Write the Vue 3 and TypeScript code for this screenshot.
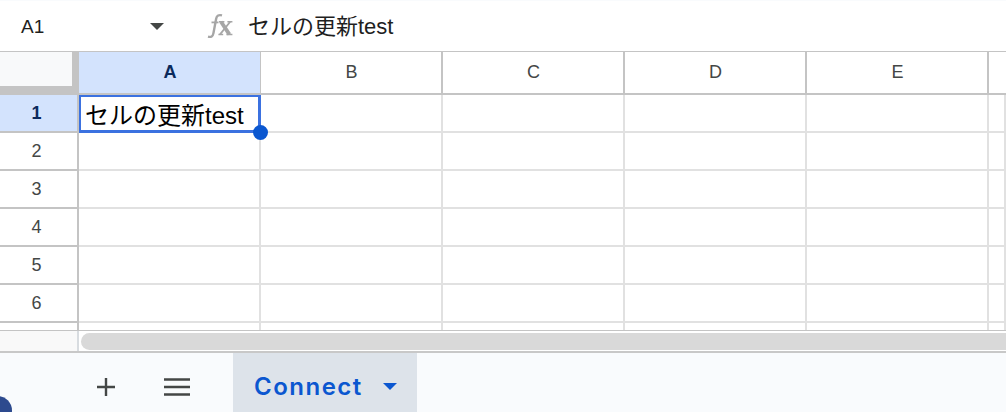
<script setup lang="ts">
const cols: string[] = ['A', 'B', 'C', 'D', 'E']
const rows: number[] = [1, 2, 3, 4, 5, 6]
const extraCols: number[] = [0, 1, 2, 3, 4, 5]
</script>

<template>
  <div class="app">
    <div class="formula">
      <div class="namebox">
        <span class="cellname">A1</span>
        <span class="caret"></span>
      </div>
      <svg class="fx" width="28" height="28" viewBox="0 0 28 28">
        <path d="M17 3.4c-3.2-.9-5.2.2-5.8 3.2L8.4 21.4c-.6 3-2.2 4-5.4 3.2" fill="none" stroke="#a6a6a6" stroke-width="2.4" />
        <path d="M6.5 10.4h7" fill="none" stroke="#a6a6a6" stroke-width="1.8" />
        <path d="M16 9.8l8.4 12.6" fill="none" stroke="#a6a6a6" stroke-width="3.8" />
        <path d="M25.2 9.8L15 22.4" fill="none" stroke="#a6a6a6" stroke-width="1.8" />
        <path d="M14 9.7h5.4M22.4 9.7h5M13.4 22.4h4.8M21.4 22.4h6" fill="none" stroke="#a6a6a6" stroke-width="1.5" />
      </svg>
      <span class="formula-text">セルの更新test</span>
    </div>

    <div class="sheet">
      <div class="corner"><div class="corner-inner"></div></div>
      <div
        v-for="(c, i) in cols"
        :key="c"
        class="colhead"
        :class="{ selected: i === 0 }"
      >{{ c }}</div>
      <div class="colhead tail"></div>

      <template v-for="r in rows" :key="r">
        <div class="rowhead" :class="{ selected: r === 1 }">{{ r }}</div>
        <div v-for="c in extraCols" :key="c" class="cell"></div>
      </template>

      <div class="rowhead stub"></div>
      <div v-for="c in extraCols" :key="'s' + c" class="cell stub"></div>

      <div class="active">
        <span class="active-text">セルの更新test</span>
        <span class="handle"></span>
      </div>
    </div>

    <div class="scrollrow">
      <div class="scroll-left"></div>
      <div class="scroll-track"><div class="thumb"></div></div>
    </div>

    <div class="tabbar">
      <svg class="icon-plus" width="20" height="20" viewBox="0 0 20 20">
        <path d="M10 1v18M1 10h18" stroke="#444746" stroke-width="2.4" fill="none" />
      </svg>
      <svg class="icon-menu" width="26" height="18" viewBox="0 0 26 18">
        <path d="M0 1.5h26M0 9h26M0 16.5h26" stroke="#444746" stroke-width="2.4" fill="none" />
      </svg>
      <div class="tab">
        <span class="tab-name">Connect</span>
        <span class="tab-caret"></span>
      </div>
      <div class="desk-corner"></div>
    </div>
  </div>
</template>

<style>
html, body { margin: 0; background: #fff; overflow: hidden; }
</style>

<style scoped>
.app {
  position: relative;
  width: 1006px;
  height: 412px;
  overflow: hidden;
  display: flex;
  flex-direction: column;
  background: #fff;
  font-family: "Liberation Sans", "Noto Sans CJK JP", sans-serif;
}
.formula {
  flex: none;
  box-sizing: border-box;
  border-top: 1px solid #f9fbfd;
  border-bottom: 1px solid #c4c4c4;
  height: 52px;
  display: flex;
  align-items: center;
  color: #1f1f1f;
}
.namebox {
  width: 205px;
  flex: none;
  display: flex;
  align-items: center;
  padding-left: 21px;
  box-sizing: border-box;
}
.cellname { font-size: 19px; width: 129px; padding-top: 2px; }
.caret {
  width: 0;
  height: 0;
  border-left: 7px solid transparent;
  border-right: 7px solid transparent;
  border-top: 7px solid #444746;
}
.fx { flex: none; margin-right: 15px; }
.formula-text { font-size: 22px; color: #1f1f1f; margin-bottom: 4px; }

.sheet {
  position: relative;
  flex: none;
  display: grid;
  grid-template-columns: 79px repeat(5, 182px) 1fr;
  grid-template-rows: 43px repeat(6, 38px) 7px;
}
.corner {
  background: #c4c4c4;
  box-sizing: border-box;
}
.corner-inner {
  width: 72px;
  height: 34px;
  background: #f8f9fa;
}
.colhead {
  display: flex;
  align-items: center;
  justify-content: center;
  box-sizing: border-box;
  border-right: 2px solid #c4c4c4;
  border-bottom: 2px solid #c4c4c4;
  font-size: 18px;
  color: #444746;
  padding-left: 1px;
}
.colhead.selected {
  background: #d3e3fd;
  color: #0b2a5c;
  font-weight: 700;
  border-right-width: 1px;
}
.colhead.tail { border-right: none; }
.rowhead {
  display: flex;
  align-items: center;
  justify-content: center;
  box-sizing: border-box;
  border-right: 2px solid #c4c4c4;
  border-bottom: 2px solid #c4c4c4;
  font-size: 18px;
  color: #444746;
  padding: 1px 4px 0 0;
}
.rowhead.selected {
  background: #d3e3fd;
  color: #0b2a5c;
  font-weight: 700;
}
.cell {
  box-sizing: border-box;
  border-right: 2px solid #e1e1e1;
  border-bottom: 2px solid #e1e1e1;
}
.stub { border-bottom: none; padding: 0; }
.active {
  position: absolute;
  left: 79px;
  top: 43px;
  width: 182px;
  height: 38px;
  box-sizing: border-box;
  border: 2px solid #3b71e0;
  border-right-width: 3px;
  border-bottom-width: 3px;
  background: #fff;
  display: flex;
  align-items: center;
}
.active-text {
  font-size: 24px;
  color: #000;
  padding-left: 4px;
  white-space: nowrap;
}
.handle {
  position: absolute;
  right: -10px;
  bottom: -10px;
  width: 15px;
  height: 15px;
  border-radius: 50%;
  background: #0b57d0;
}
.scrollrow {
  flex: none;
  height: 23px;
  box-sizing: border-box;
  border-top: 1px solid #c4c4c4;
  border-bottom: 2px solid #c8c8c8;
  display: flex;
  background: #fff;
}
.scroll-left {
  width: 79px;
  background: #f9f9f9;
  border-right: 2px solid #d8dce0;
  box-sizing: border-box;
}
.scroll-track {
  flex: 1;
  padding: 2px 0 1px 2px;
}
.thumb {
  height: 17px;
  border-radius: 9px 0 0 9px;
  background: #d9d9d9;
}
.tabbar {
  position: relative;
  flex: 1;
  background: #f9fbfd;
  display: flex;
  align-items: stretch;
  padding-left: 96px;
  overflow: hidden;
}
.icon-plus { flex: none; align-self: flex-start; margin-top: 24px; }
.icon-menu { flex: none; align-self: flex-start; margin: 25px 0 0 48px; }
.tab {
  flex: none;
  margin-left: 43px;
  width: 184px;
  box-sizing: border-box;
  background: #dde3ea;
  display: flex;
  align-items: center;
  padding: 8px 0 0 21px;
  color: #0b57d0;
}
.tab-name {
  flex: none;
  width: 129px;
  font-family: Inter, Roboto, sans-serif;
  font-size: 24px;
  font-weight: 600;
  letter-spacing: 1.5px;
}
.tab-caret {
  width: 0;
  height: 0;
  border-left: 7px solid transparent;
  border-right: 7px solid transparent;
  border-top: 7px solid #0b57d0;
}
.desk-corner {
  position: absolute;
  left: -17px;
  bottom: -13px;
  width: 29px;
  height: 29px;
  border-radius: 50%;
  background: #2d4a8e;
}
</style>
